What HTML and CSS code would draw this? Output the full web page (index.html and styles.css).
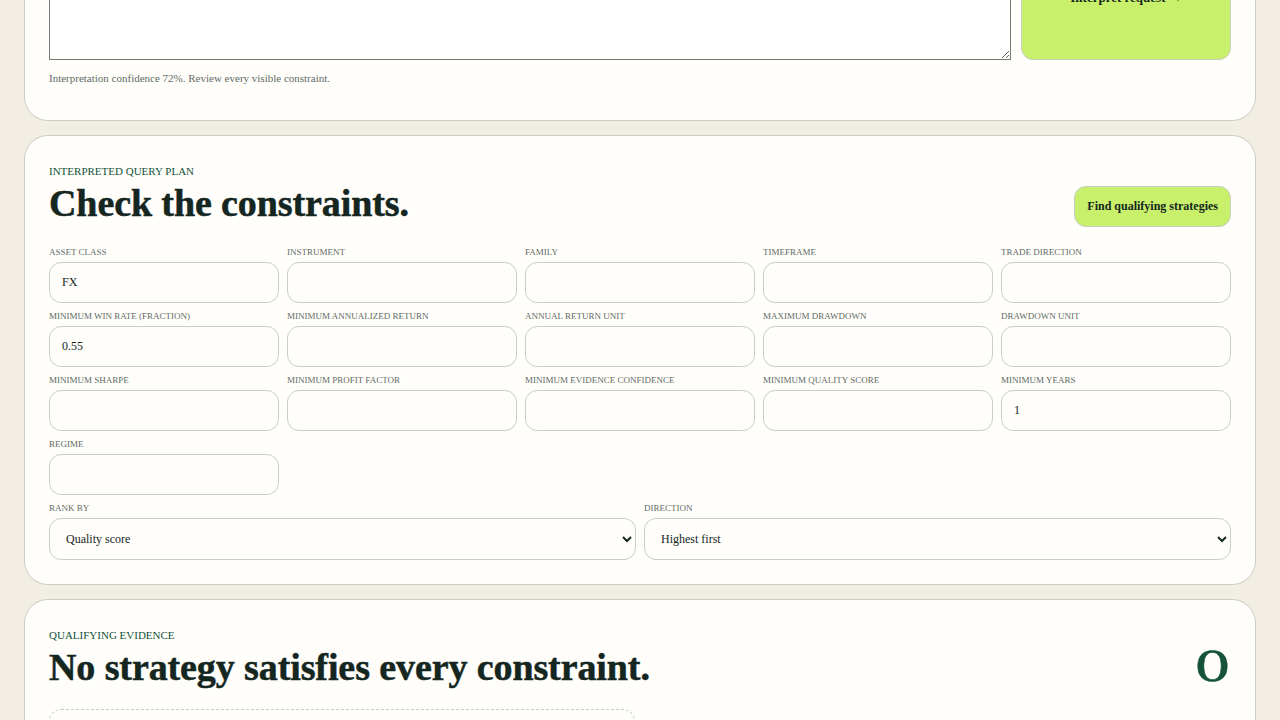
FILE: index.html
```html
<!DOCTYPE html>
<html lang="en">
<head>
  <meta charset="UTF-8">
  <meta name="viewport" content="width=device-width, initial-scale=1.0">
  <title>Strategy Evidence Query</title>
  <link rel="stylesheet" href="styles.css">
</head>
<body>
  <main class="page">
    <!-- Request -->
    <section class="panel request-panel">
      <div class="request-row">
        <textarea class="request-input" aria-label="Request"></textarea>
        <button class="btn request-btn" type="button">Interpret request →</button>
      </div>
      <p class="note">Interpretation confidence 72%. Review every visible constraint.</p>
    </section>

    <!-- Query plan -->
    <section class="panel">
      <div class="panel-head">
        <div>
          <p class="eyebrow">Interpreted query plan</p>
          <h2 class="panel-title">Check the constraints.</h2>
        </div>
        <button class="btn" type="button">Find qualifying strategies</button>
      </div>
      <div class="field-grid">
        <label class="field"><span>Asset class</span><input type="text" value="FX"></label>
        <label class="field"><span>Instrument</span><input type="text"></label>
        <label class="field"><span>Family</span><input type="text"></label>
        <label class="field"><span>Timeframe</span><input type="text"></label>
        <label class="field"><span>Trade direction</span><input type="text"></label>
        <label class="field"><span>Minimum win rate (fraction)</span><input type="text" value="0.55"></label>
        <label class="field"><span>Minimum annualized return</span><input type="text"></label>
        <label class="field"><span>Annual return unit</span><input type="text"></label>
        <label class="field"><span>Maximum drawdown</span><input type="text"></label>
        <label class="field"><span>Drawdown unit</span><input type="text"></label>
        <label class="field"><span>Minimum Sharpe</span><input type="text"></label>
        <label class="field"><span>Minimum profit factor</span><input type="text"></label>
        <label class="field"><span>Minimum evidence confidence</span><input type="text"></label>
        <label class="field"><span>Minimum quality score</span><input type="text"></label>
        <label class="field"><span>Minimum years</span><input type="text" value="1"></label>
        <label class="field"><span>Regime</span><input type="text"></label>
      </div>
      <div class="sort-grid">
        <label class="field"><span>Rank by</span>
          <select><option>Quality score</option></select>
        </label>
        <label class="field"><span>Direction</span>
          <select><option>Highest first</option></select>
        </label>
      </div>
    </section>

    <!-- Results -->
    <section class="panel">
      <div class="panel-head results-head">
        <div>
          <p class="eyebrow">Qualifying evidence</p>
          <h2 class="panel-title">No strategy satisfies every constraint.</h2>
        </div>
        <div class="result-count">0</div>
      </div>
      <div class="empty-box"></div>
    </section>
  </main>
</body>
</html>
```

FILE: styles.css
```css
* {
  margin: 0;
  padding: 0;
  box-sizing: border-box;
}
:root {
  --bg: #f2eee6;
  --panel: #fffefa;
  --line: #c8cec6;
  --ink: #14261f;
  --muted: #5f6b66;
  --green: #14523c;
  --lime: #c9f06a;
}
html, body {
  height: 720px;
  overflow: hidden;
}
body {
  font-family: "Liberation Serif", serif;
  font-size: 12px;
  color: var(--ink);
  background: var(--bg);
}

/* The page is shown scrolled, so the first panel starts above the window */
.page {
  display: flex;
  flex-direction: column;
  gap: 14px;
  padding: 0 24px;
  margin-top: -93px;
}
.panel {
  background: var(--panel);
  border: 1px solid var(--line);
  border-radius: 24px;
  padding: 28px 24px 24px;
}

/* Buttons */
.btn {
  padding: 0 12px;
  height: 41px;
  font-family: inherit;
  font-size: 12px;
  font-weight: 700;
  color: var(--ink);
  background: var(--lime);
  border: 1px solid var(--line);
  border-radius: 12px;
}

/* Request panel */
.request-panel {
  padding-bottom: 35px;
}
.request-row {
  display: flex;
  gap: 10px;
}
.request-input {
  flex: 1;
  height: 124px;
  background: #fff;
  border: 1px solid #767676;
}
.request-btn {
  width: 210px;
  height: auto;
  font-size: 13px;
}
.note {
  margin-top: 11px;
  line-height: 14px;
  font-size: 11px;
  color: var(--muted);
}

/* Headers */
.panel-head {
  display: flex;
  justify-content: space-between;
  align-items: flex-end;
  margin-bottom: 20px;
}
.eyebrow {
  font-size: 11px;
  line-height: 15px;
  text-transform: uppercase;
  color: var(--green);
}
.panel-title {
  font-size: 38px;
  line-height: 48px;
  font-weight: 700;
  letter-spacing: -0.1px;
  -webkit-text-stroke: 0.5px var(--ink);
}
.result-count {
  font-family: "DejaVu Serif", serif;
  font-size: 41px;
  line-height: 48px;
  color: var(--green);
  -webkit-text-stroke: 0.5px var(--green);
  transform: scaleX(1.42);
  transform-origin: right center;
}
.results-head {
  margin-bottom: 18px;
}

/* Fields */
.field-grid {
  display: grid;
  grid-template-columns: repeat(5, 1fr);
  gap: 8px;
}
.sort-grid {
  display: grid;
  grid-template-columns: repeat(2, 1fr);
  gap: 8px;
  margin-top: 8px;
}
.field {
  display: flex;
  flex-direction: column;
  gap: 4px;
}
.field span {
  font-size: 9px;
  line-height: 11px;
  text-transform: uppercase;
  color: var(--muted);
}
.field input,
.field select {
  width: 100%;
  height: 41px;
  padding: 0 12px;
  font-family: inherit;
  font-size: 12px;
  color: var(--ink);
  background: var(--panel);
  border: 1px solid var(--line);
  border-radius: 12px;
}
.field select {
  height: 42px;
}

/* Empty result */
.empty-box {
  width: 586px;
  height: 120px;
  border: 1px dashed var(--line);
  border-radius: 12px;
}
```
